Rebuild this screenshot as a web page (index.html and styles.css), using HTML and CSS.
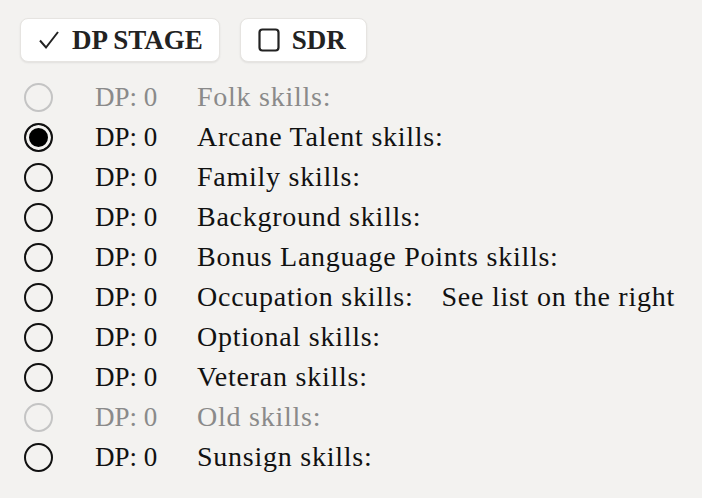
FILE: index.html
```html
<!DOCTYPE html>
<html lang="en">
<head>
<meta charset="utf-8">
<title>DP Stage</title>
<link rel="stylesheet" href="styles.css">
</head>
<body>
<div class="page">
  <div class="toolbar">
    <button class="btn">
      <svg class="ico" width="22" height="22" viewBox="0 0 22 22"><path d="M2 11.5 L8 18.5 L20 3" fill="none" stroke="#222" stroke-width="2"/></svg>
      <span>DP STAGE</span>
    </button>
    <button class="btn sdr">
      <svg class="ico" width="22" height="24" viewBox="0 0 22 24"><rect x="1.5" y="1.5" width="19" height="21" rx="3" fill="none" stroke="#222" stroke-width="2.2"/></svg>
      <span>SDR</span>
    </button>
  </div>
  <div class="list">
    <div class="row dim"><span class="radio"></span><span class="dp">DP: 0</span><span class="lbl">Folk skills:</span></div>
    <div class="row"><span class="radio on"></span><span class="dp">DP: 0</span><span class="lbl">Arcane Talent skills:</span></div>
    <div class="row"><span class="radio"></span><span class="dp">DP: 0</span><span class="lbl">Family skills:</span></div>
    <div class="row"><span class="radio"></span><span class="dp">DP: 0</span><span class="lbl">Background skills:</span></div>
    <div class="row"><span class="radio"></span><span class="dp">DP: 0</span><span class="lbl">Bonus Language Points skills:</span></div>
    <div class="row"><span class="radio"></span><span class="dp">DP: 0</span><span class="lbl">Occupation skills:</span><span class="note">See list on the right</span></div>
    <div class="row"><span class="radio"></span><span class="dp">DP: 0</span><span class="lbl">Optional skills:</span></div>
    <div class="row"><span class="radio"></span><span class="dp">DP: 0</span><span class="lbl">Veteran skills:</span></div>
    <div class="row dim"><span class="radio"></span><span class="dp">DP: 0</span><span class="lbl">Old skills:</span></div>
    <div class="row"><span class="radio"></span><span class="dp">DP: 0</span><span class="lbl">Sunsign skills:</span></div>
  </div>
</div>
</body>
</html>
```

FILE: styles.css
```css
html, body {
  margin: 0;
  padding: 0;
  background: #f3f2f0;
}
body {
  font-family: "Liberation Serif", "DejaVu Serif", serif;
  color: #111;
  font-size: 28px;
}
.page {
  padding: 18px 0 0 20px;
}
.toolbar {
  display: flex;
  gap: 20px;
}
.btn {
  display: flex;
  align-items: center;
  gap: 12px;
  height: 44px;
  padding: 0 16px 0 17px;
  background: #fff;
  border: 1px solid #e6e4e1;
  border-radius: 8px;
  box-shadow: 0 1px 2px rgba(0,0,0,0.08);
  font-family: "Liberation Serif", serif;
  font-weight: bold;
  font-size: 27px;
  color: #222;
}
.btn.sdr {
  padding-right: 20px;
}
.ico {
  display: block;
}
.list {
  margin-top: 15px;
  padding-left: 4px;
}
.row {
  display: grid;
  grid-template-columns: 71px 102px auto auto;
  align-items: center;
  height: 40px;
  justify-content: start;
  letter-spacing: 0.75px;
}
.dp {
  letter-spacing: 0;
  font-size: 27px;
}
.row.dim {
  color: #8a8a8a;
}
.radio {
  box-sizing: border-box;
  width: 29px;
  height: 29px;
  border: 2px solid #111;
  border-radius: 50%;
  background: transparent;
}
.row.dim .radio {
  border-color: #c4c4c4;
}
.radio.on {
  background: #000;
  box-shadow: inset 0 0 0 3px #f3f2f0;
}
.note {
  margin-left: 28px;
}
```
